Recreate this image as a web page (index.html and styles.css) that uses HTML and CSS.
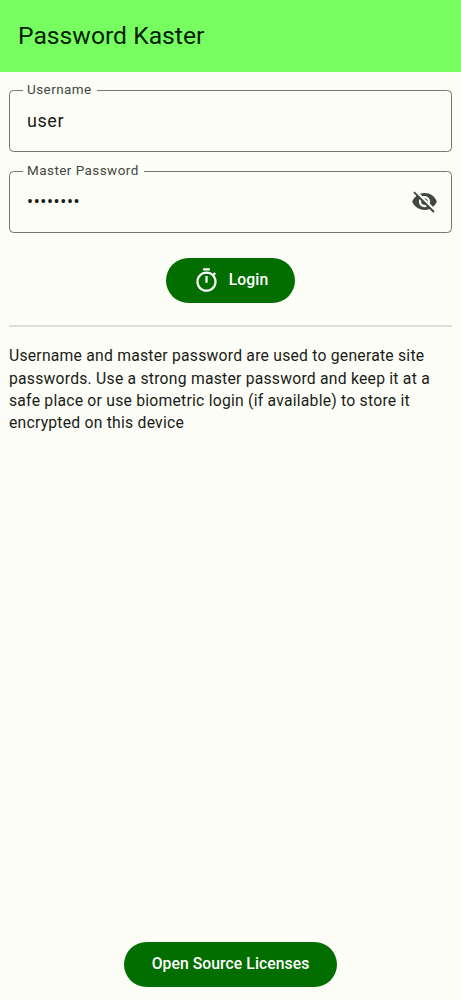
FILE: index.html
```html
<!DOCTYPE html>
<html lang="en">
<head>
<meta charset="utf-8">
<title>Password Kaster</title>
<link rel="stylesheet" href="styles.css">
</head>
<body>
<div class="screen">
  <header class="app-bar"><h1 class="title">Password Kaster</h1></header>
  <main class="content">
    <div class="field">
      <span class="field-label">Username</span>
      <span class="field-value">user</span>
    </div>
    <div class="field">
      <span class="field-label">Master Password</span>
      <span class="field-value">••••••••</span>
      <svg class="eye" viewBox="0 0 24 24"><path d="M12 7c2.76 0 5 2.24 5 5 0 .65-.13 1.26-.36 1.83l2.92 2.92c1.51-1.26 2.7-2.89 3.43-4.75-1.73-4.39-6-7.5-11-7.5-1.4 0-2.74.25-3.98.7l2.16 2.16C10.74 7.13 11.35 7 12 7zM2 4.27l2.28 2.28.46.46C3.08 8.3 1.78 10.02 1 12c1.73 4.39 6 7.5 11 7.5 1.55 0 3.03-.3 4.38-.84l.42.42L19.73 22 21 20.73 3.27 3 2 4.27zM7.53 9.8l1.55 1.55c-.05.21-.08.43-.08.65 0 1.66 1.34 3 3 3 .22 0 .44-.03.65-.08l1.55 1.55c-.67.33-1.41.53-2.2.53-2.76 0-5-2.24-5-5 0-.79.2-1.53.53-2.2zm4.31-.78l3.15 3.15.02-.16c0-1.66-1.34-3-3-3l-.17.01z"/></svg>
    </div>
    <button class="button login" type="button">
      <svg class="timer" viewBox="0 0 24 24"><path d="M15 1H9v2h6V1zm-4 13h2V8h-2v6zm8.03-6.61l1.42-1.42c-.43-.51-.9-.99-1.41-1.41l-1.42 1.42C16.07 4.74 14.12 4 12 4c-4.97 0-9 4.03-9 9s4.02 9 9 9 9-4.03 9-9c0-2.12-.74-4.07-1.97-5.61zM12 20c-3.87 0-7-3.13-7-7s3.13-7 7-7 7 3.13 7 7-3.13 7-7 7z"/></svg>
      <span>Login</span>
    </button>
    <div class="divider"></div>
    <p class="info">Username and master password are used to generate site passwords. Use a strong master password and keep it at a safe place or use biometric login (if available) to store it encrypted on this device</p>
    <button class="button licenses" type="button">Open Source Licenses</button>
  </main>
</div>
</body>
</html>
```
FILE: styles.css
```css
* { box-sizing: border-box; }
body {
  margin: 0;
  background: #fcfdf6;
  color: #1a1c18;
  font-family: Roboto, sans-serif;
}
.screen {
  height: 1000px;
  display: flex;
  flex-direction: column;
}
.app-bar {
  height: 71.6px;
  flex: none;
  display: flex;
  align-items: center;
  padding-left: 18px;
  background: #77ff61;
  color: #022100;
}
.title {
  margin: 0;
  font-size: 24.7px;
  font-weight: 400;
  line-height: 31px;
}
.content {
  flex: 1;
  display: flex;
  flex-direction: column;
  padding: 18.4px 9px 13.4px;
}
.field {
  position: relative;
  flex: none;
  display: flex;
  align-items: center;
  justify-content: space-between;
  height: 62.4px;
  padding: 0 13px 1.2px 17px;
  margin-bottom: 18.2px;
  border: 1px solid #73796e;
  border-radius: 4.5px;
}
.field-label {
  position: absolute;
  left: 12.5px;
  top: -9px;
  padding: 0 5px 0 4.5px;
  background: #fcfdf6;
  color: #43483f;
  font-size: 13.47px;
  line-height: 16px;
  letter-spacing: 0.45px;
}
.field-value {
  font-size: 17.96px;
  line-height: 27px;
  letter-spacing: 0.6px;
}
.eye {
  width: 27px;
  height: 27px;
  fill: #43483f;
}
.button {
  flex: none;
  align-self: center;
  display: flex;
  align-items: center;
  justify-content: center;
  height: 45px;
  padding: 0 27px;
  border: 0;
  border-radius: 22.5px;
  background: #026e00;
  color: #fff;
  font: 500 15.72px/22px Roboto, sans-serif;
  letter-spacing: 0.1px;
}
.login { margin-top: 6.8px; }
.timer {
  width: 27px;
  height: 27px;
  margin-right: 9px;
  fill: #fff;
}
.divider {
  flex: none;
  height: 2px;
  margin-top: 22px;
  background: #dddfd8;
}
.info {
  margin: 18.2px 0 0;
  font-size: 15.72px;
  line-height: 22.45px;
  letter-spacing: 0.23px;
}
.licenses {
  width: 212.4px;
  padding: 0;
  margin-top: auto;
  letter-spacing: 0.07px;
}
```
